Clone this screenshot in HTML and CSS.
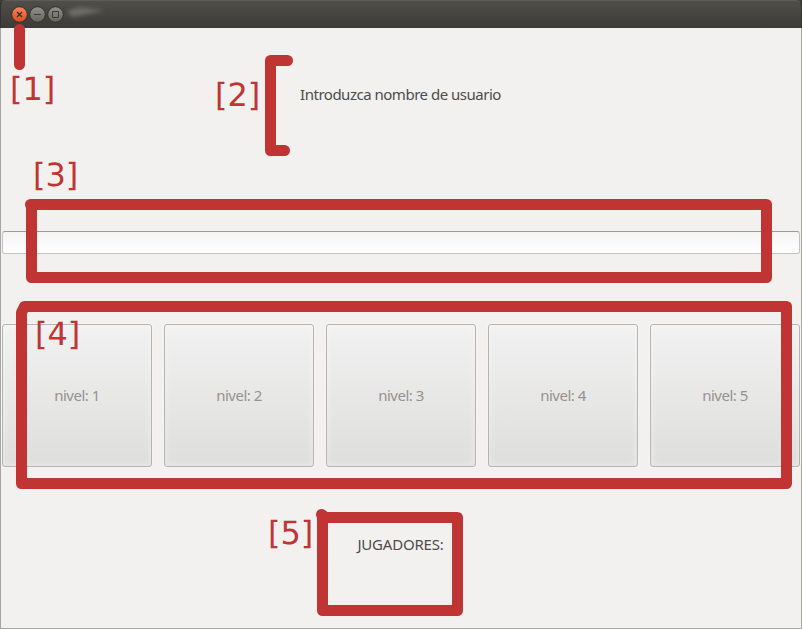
FILE: index.html
```html
<!DOCTYPE html>
<html lang="es">
<head>
<meta charset="utf-8">
<title>Usuario</title>
<link rel="stylesheet" href="styles.css">
</head>
<body>
<div class="window">
  <header class="titlebar">
    <svg class="controls" width="110" height="28" viewBox="0 0 110 28">
      <defs>
        <linearGradient id="close" x1="0" y1="0" x2="0" y2="1"><stop offset="0" stop-color="#f6875e"/><stop offset="1" stop-color="#df4c1c"/></linearGradient>
        <linearGradient id="grey" x1="0" y1="0" x2="0" y2="1"><stop offset="0" stop-color="#92918a"/><stop offset="1" stop-color="#66645e"/></linearGradient>
        <filter id="soft" x="-20%" y="-50%" width="140%" height="200%"><feGaussianBlur stdDeviation="2"/></filter>
      </defs>
      <g stroke="#302f2b">
        <circle cx="19.5" cy="14.5" r="7.8" fill="url(#close)"/>
        <circle cx="37.5" cy="14.5" r="7.8" fill="url(#grey)"/>
        <circle cx="55.5" cy="14.5" r="7.8" fill="url(#grey)"/>
      </g>
      <path d="M17 12l5 5M22 12l-5 5" stroke="#3c2a22" stroke-width="1.3"/>
      <path d="M34 14.5h7M52.5 11.5h6v6h-6z" fill="none" stroke="#3c3b37"/>
      <path d="M67 12Q75 6 87 8L105 11L88 14L72 17Z" fill="#74736d" opacity=".85" filter="url(#soft)"/>
    </svg>
  </header>
  <main class="content">
    <p class="prompt"><span class="prompt-text">Introduzca nombre de usuario</span></p>
    <input class="entry" type="text" aria-label="Nombre de usuario">
    <div class="levels">
      <button class="level" disabled>nivel: 1</button>
      <button class="level" disabled>nivel: 2</button>
      <button class="level" disabled>nivel: 3</button>
      <button class="level" disabled>nivel: 4</button>
      <button class="level" disabled>nivel: 5</button>
    </div>
    <p class="players"><span class="players-text">JUGADORES:</span></p>
  </main>
</div>
<svg class="notes" width="802" height="629" viewBox="0 0 802 629">
  <g class="marks">
    <path d="M19.500 29.500V64.500"/>
    <path d="M287.500 60.500H270.500V150.500H284.500"/>
    <path d="M30.500 204.500H766.500V277.500H31.500V204.500"/>
    <path d="M24.500 306.500H786.500V483.500H21.500V312.500L24.500 306.500"/>
    <path d="M321.500 514.500L323 517.500H457.500V610.500H322.500V515"/>
  </g>
  <g class="labels">
    <text x="10" y="100">[1]</text>
    <text x="215" y="106">[2]</text>
    <text x="33" y="186">[3]</text>
    <text x="35" y="345">[4]</text>
    <text x="268" y="544">[5]</text>
  </g>
</svg>
</body>
</html>
```
FILE: styles.css
```css
* { box-sizing: border-box; }
body {
  margin: 0;
  background: #3c3b37;
  font: 15px "Noto Sans", "Open Sans", sans-serif;
  color: #4c4c4c;
}
.window {
  display: flex;
  flex-direction: column;
  width: 802px;
  height: 629px;
}
.titlebar {
  height: 28px;
  background: linear-gradient(#4f4e49, #3c3b37);
  border: 1px solid #33322e;
  border-top-color: #5d5c56;
  border-bottom: 0;
  border-radius: 6px 6px 0 0;
}
.controls { display: block; margin: -1px 0 0 -1px; }
.content {
  flex: 1;
  display: flex;
  flex-direction: column;
  padding: 0 1px;
  background: #f2f1f0;
  border: 1px solid #a9a6a2;
  border-top: 0;
}
.prompt {
  height: 132px;
  margin: 0 0 71px;
  display: flex;
  align-items: center;
  justify-content: center;
}
.prompt-text { letter-spacing: -0.49px; margin-right: 1px; }
.entry {
  width: 798px;
  height: 23px;
  margin: 0 0 70px;
  padding: 2px 5px;
  border: 1px solid #c3c2c0;
  border-top-color: #9c9a97;
  border-radius: 3px;
  background: linear-gradient(#f4f4f4, #fff);
  outline: 0;
}
.levels {
  display: flex;
  gap: 12px;
  height: 143px;
}
.level {
  width: 150px;
  padding: 0 0 2px;
  border: 1px solid #b5b4b2;
  border-radius: 3px;
  background: linear-gradient(#f1f1f1, #dededd);
  box-shadow: inset 0 0 7px 1px rgba(255, 255, 255, .35), 0 0 0 1px rgba(255, 255, 255, .3);
  font: inherit;
  letter-spacing: -0.5px;
  color: #96928d;
}
.players {
  flex: 1;
  display: flex;
  align-items: center;
  justify-content: center;
  margin: 0;
  padding-bottom: 7px;
}
.players-text { letter-spacing: -0.2px; margin-right: 1px; }
.notes {
  position: absolute;
  top: 0;
  left: 0;
  pointer-events: none;
}
.marks {
  fill: none;
  stroke: #c03433;
  stroke-width: 11px;
  stroke-linecap: round;
  stroke-linejoin: round;
}
.labels {
  font-family: "DejaVu Sans", sans-serif;
  font-size: 32px;
  text-rendering: geometricPrecision;
  fill: #c03433;
}
```
